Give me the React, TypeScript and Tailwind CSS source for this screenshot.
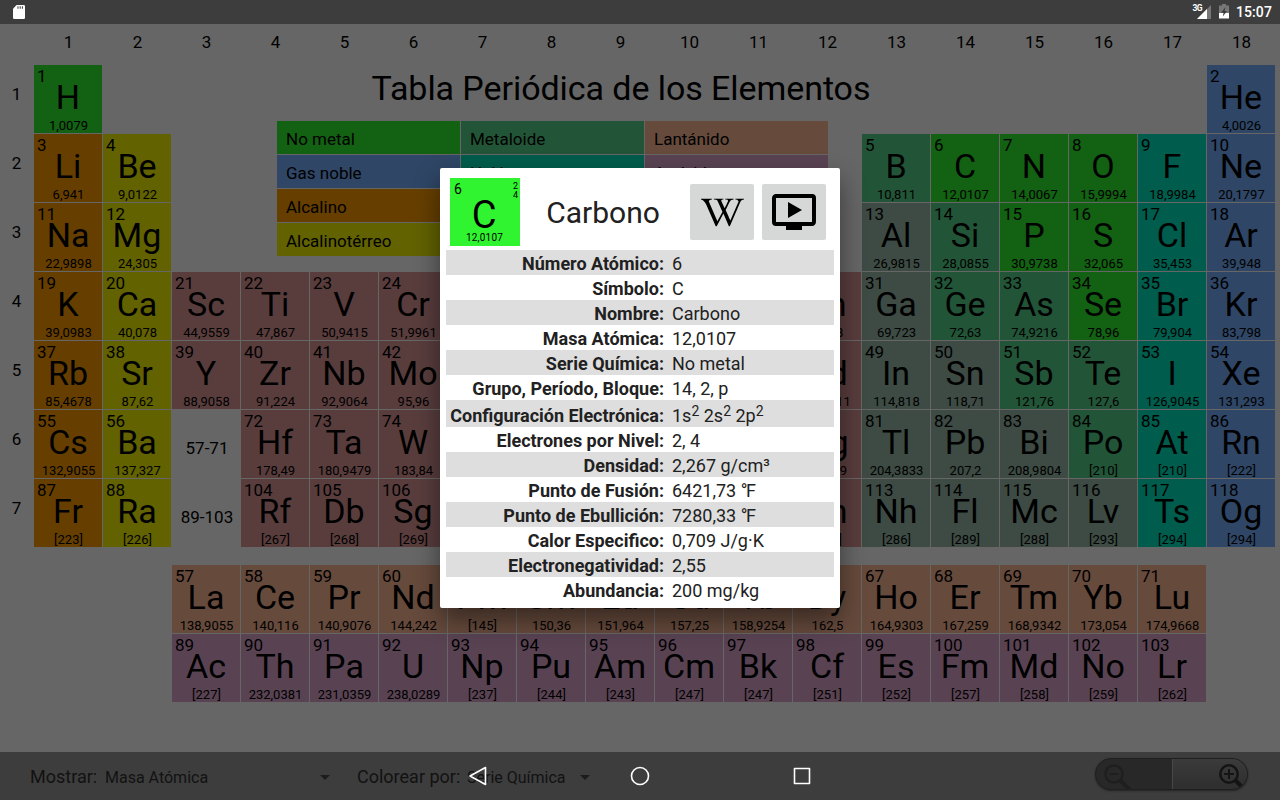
import type { ReactNode } from 'react';
import { FaWikipediaW } from 'react-icons/fa';
import { MdOndemandVideo } from 'react-icons/md';

type Series = 'N' | 'G' | 'A' | 'T' | 'M' | 'H' | 'P' | 'X' | 'L' | 'C';

const SERIES_BG: Record<Series, string> = {
  N: 'bg-[#136112]',
  G: 'bg-[#2f4666]',
  A: 'bg-[#663f00]',
  T: 'bg-[#626200]',
  M: 'bg-[#225537]',
  H: 'bg-[#005c4c]',
  X: 'bg-[#593d3d]',
  P: 'bg-[#3d4b44]',
  L: 'bg-[#664a3c]',
  C: 'bg-[#594353]',
};

const COLS = [
  '', 'col-start-2', 'col-start-3', 'col-start-4', 'col-start-5', 'col-start-6', 'col-start-7', 'col-start-8',
  'col-start-9', 'col-start-10', 'col-start-11', 'col-start-12', 'col-start-[13]', 'col-start-[14]', 'col-start-[15]',
  'col-start-[16]', 'col-start-[17]', 'col-start-[18]', 'col-start-[19]',
];

const ROWS = [
  '', 'row-start-2', 'row-start-3', 'row-start-4', 'row-start-5', 'row-start-6', 'row-start-7', 'row-start-8',
  'row-start-10', 'row-start-11',
];

// number, symbol, mass, series; each line is a run of neighbours: row, first column, elements
const RUNS: [number, number, string][] = [
  [1, 1, '1 H 1,0079 N'],
  [1, 18, '2 He 4,0026 G'],
  [2, 1, '3 Li 6,941 A|4 Be 9,0122 T'],
  [2, 13, '5 B 10,811 M|6 C 12,0107 N|7 N 14,0067 N|8 O 15,9994 N|9 F 18,9984 H|10 Ne 20,1797 G'],
  [3, 1, '11 Na 22,9898 A|12 Mg 24,305 T'],
  [3, 13, '13 Al 26,9815 P|14 Si 28,0855 M|15 P 30,9738 N|16 S 32,065 N|17 Cl 35,453 H|18 Ar 39,948 G'],
  [4, 1, '19 K 39,0983 A|20 Ca 40,078 T|21 Sc 44,9559 X|22 Ti 47,867 X|23 V 50,9415 X|24 Cr 51,9961 X|25 Mn 54,938 X|26 Fe 55,845 X|27 Co 58,9332 X|28 Ni 58,6934 X|29 Cu 63,546 X|30 Zn 65,38 X|31 Ga 69,723 P|32 Ge 72,63 M|33 As 74,9216 M|34 Se 78,96 N|35 Br 79,904 H|36 Kr 83,798 G'],
  [5, 1, '37 Rb 85,4678 A|38 Sr 87,62 T|39 Y 88,9058 X|40 Zr 91,224 X|41 Nb 92,9064 X|42 Mo 95,96 X|43 Tc [98] X|44 Ru 101,07 X|45 Rh 102,9055 X|46 Pd 106,42 X|47 Ag 107,8682 X|48 Cd 112,411 X|49 In 114,818 P|50 Sn 118,71 P|51 Sb 121,76 M|52 Te 127,6 M|53 I 126,9045 H|54 Xe 131,293 G'],
  [6, 1, '55 Cs 132,9055 A|56 Ba 137,327 T'],
  [6, 4, '72 Hf 178,49 X|73 Ta 180,9479 X|74 W 183,84 X|75 Re 186,207 X|76 Os 190,23 X|77 Ir 192,217 X|78 Pt 195,084 X|79 Au 196,9666 X|80 Hg 200,59 X|81 Tl 204,3833 P|82 Pb 207,2 P|83 Bi 208,9804 P|84 Po [210] M|85 At [210] H|86 Rn [222] G'],
  [7, 1, '87 Fr [223] A|88 Ra [226] T'],
  [7, 4, '104 Rf [267] X|105 Db [268] X|106 Sg [269] X|107 Bh [270] X|108 Hs [269] X|109 Mt [278] X|110 Ds [281] X|111 Rg [281] X|112 Cn [285] X|113 Nh [286] P|114 Fl [289] P|115 Mc [288] P|116 Lv [293] P|117 Ts [294] H|118 Og [294] G'],
  [8, 3, '57 La 138,9055 L|58 Ce 140,116 L|59 Pr 140,9076 L|60 Nd 144,242 L|61 Pm [145] L|62 Sm 150,36 L|63 Eu 151,964 L|64 Gd 157,25 L|65 Tb 158,9254 L|66 Dy 162,5 L|67 Ho 164,9303 L|68 Er 167,259 L|69 Tm 168,9342 L|70 Yb 173,054 L|71 Lu 174,9668 L'],
  [9, 3, '89 Ac [227] C|90 Th 232,0381 C|91 Pa 231,0359 C|92 U 238,0289 C|93 Np [237] C|94 Pu [244] C|95 Am [243] C|96 Cm [247] C|97 Bk [247] C|98 Cf [251] C|99 Es [252] C|100 Fm [257] C|101 Md [258] C|102 No [259] C|103 Lr [262] C'],
];

const LEGEND: [string, string][] = [
  ['No metal', SERIES_BG.N], ['Metaloide', SERIES_BG.M], ['Lantánido', SERIES_BG.L],
  ['Gas noble', SERIES_BG.G], ['Halógeno', SERIES_BG.H], ['Actínido', SERIES_BG.C],
  ['Alcalino', SERIES_BG.A], ['Otros metales', SERIES_BG.P], ['', ''],
  ['Alcalinotérreo', SERIES_BG.T], ['Metal de transición', SERIES_BG.X], ['', ''],
];

function Cell({ row, col, data }: { row: number; col: number; data: string }) {
  const [num, sym, mass, series] = data.split(' ');
  return (
    <div className={`grid grid-cols-[68px] grid-rows-[68px] ${COLS[col]} ${ROWS[row]} ${SERIES_BG[series as Series]}`}>
      <span className="col-start-1 row-start-1 self-start justify-self-start pt-px pl-[3px] text-[17px] leading-5">{num}</span>
      <span className="col-start-1 row-start-1 mb-[5px] self-center justify-self-center text-[34px] leading-10">{sym}</span>
      <span className="col-start-1 row-start-1 self-end justify-self-center pl-px text-[13px] leading-[14px]">{mass}</span>
    </div>
  );
}

function PeriodicTable() {
  return (
    <main className="grid h-[728px] shrink-0 grid-cols-[33px_repeat(18,68px)] grid-rows-[40px_repeat(7,68px)_16px_68px_68px] gap-px text-[17px]">
      {Array.from({ length: 18 }, (_, i) => (
        <div key={i} className={`row-start-1 flex items-center justify-center pb-[3px] pl-px ${COLS[i + 1]}`}>{i + 1}</div>
      ))}
      {Array.from({ length: 7 }, (_, i) => (
        <div key={i} className={`col-start-1 flex items-center justify-center pb-[9px] ${ROWS[i + 1]}`}>{i + 1}</div>
      ))}
      <h1 className="col-start-4 col-end-[17] row-start-2 flex items-center justify-center pb-[22px] pl-0.5 text-[34px] leading-10 tracking-[-0.07px] whitespace-nowrap">
        Tabla Periódica de los Elementos
      </h1>
      <div className="col-start-5 col-end-[14] row-start-2 row-end-5 grid grid-cols-[repeat(3,183px)] grid-rows-[repeat(4,33px)] gap-px pt-14 pl-9">
        {LEGEND.map(([name, bg], i) => (
          <div key={i} className={`flex items-center pt-[5px] pl-[9px] ${bg}`}>{name}</div>
        ))}
      </div>
      <div className="col-start-4 row-start-7 flex items-center justify-center pt-2.5 pl-0.5">57-71</div>
      <div className="col-start-4 row-start-8 flex items-center justify-center pt-2.5 pl-0.5">89-103</div>
      {RUNS.map(([row, col, list]) =>
        list.split('|').map((data, i) => <Cell key={data} row={row} col={col + i} data={data} />),
      )}
    </main>
  );
}

function StatusBar() {
  return (
    <header className="flex h-6 shrink-0 items-center bg-[#3d3d3d] pr-2 pl-3 text-white">
      <svg className="h-4 w-[13px]" viewBox="0 0 13 16">
        <path d="M4.6 1H11.8Q13 1 13 2.2V13.8Q13 15 11.8 15H2.2Q1 15 1 13.8V4.7Z" fill="#fff" />
        <path d="M5.5 2.3h1v2.5h-1zM7.7 2.3h1v2.5h-1zM9.9 2.3h1v2.5h-1z" fill="#3d3d3d" />
      </svg>
      <div className="ml-auto flex items-center">
        <span className="mr-[-6px] mb-2 text-[8.5px] leading-3 font-bold tracking-[-0.6px]">3G</span>
        <svg className="h-4 w-[15px]" viewBox="0 0 15 16">
          <path d="M15 1V15H1Z" fill="#777" />
          <path d="M11 5V15H1Z" fill="#fff" />
        </svg>
        <svg className="ml-2 h-4 w-[10px]" viewBox="0 0 10 16">
          <path d="M3 0H7V1.5H10V10H0V1.5H3Z" fill="#777" />
          <path d="M0 9H10V14.5H0Z" fill="#fff" />
          <path d="M6.5 3L2 8.8H4.6L3.8 12.5L8 7H5.6Z" fill="#3d3d3d" />
        </svg>
        <span className="ml-[7px] text-[14px] leading-4 font-medium tracking-[0.1px]">15:07</span>
      </div>
    </header>
  );
}

function BottomBar() {
  return (
    <footer className="relative flex h-12 shrink-0 items-center bg-[#3d3d3d] pt-0.5 pl-[30px] text-[#121212]">
      <span className="mb-0.5 w-[75px] text-[18px]">Mostrar:</span>
      <span className="w-[215px] pt-px text-[16px]">Masa Atómica</span>
      <svg className="h-[5px] w-[10px]" viewBox="0 0 10 5"><path d="M0 0H10L5 5Z" fill="#1c1c1c" /></svg>
      <span className="mb-0.5 ml-[27px] w-[110px] text-[18px]">Colorear por:</span>
      <span className="w-[113px] pt-px text-[16px]">Serie Química</span>
      <svg className="h-[5px] w-[10px]" viewBox="0 0 10 5"><path d="M0 0H10L5 5Z" fill="#1c1c1c" /></svg>
      <div className="mr-8 mb-[7px] ml-auto flex h-8 w-[153px] overflow-hidden rounded-full border border-[#202020] bg-[#282828] shadow-[0_1px_2px_#222]">
        <div className="flex w-[76px] items-center pt-1 pl-2">
          <svg className="h-7 w-7" viewBox="0 0 28 28" fill="none" stroke="#1f1f1f">
            <circle cx="10" cy="12" r="8.5" strokeWidth="2.5" />
            <path d="M5.5 12H14.5" strokeWidth="2" />
            <path d="M16 18L26 28" strokeWidth="4" />
          </svg>
        </div>
        <div className="flex flex-1 items-center justify-end border-l border-[#484848] bg-linear-to-b from-[#3b3b3b] to-[#2e2e2e] pt-1 pr-0.5">
          <svg className="h-7 w-7" viewBox="0 0 28 28" fill="none" stroke="#141414">
            <circle cx="12" cy="12" r="8.7" strokeWidth="2.5" />
            <path d="M7 12H17M12 7V17" strokeWidth="2" />
            <path d="M18 18L26 26" strokeWidth="4" />
          </svg>
        </div>
      </div>
      <nav className="absolute inset-0 flex items-center justify-center gap-[142px]">
        <svg className="h-5 w-5" viewBox="0 0 20 20" fill="none" stroke="#fff" strokeWidth="1.6" strokeLinejoin="round">
          <path d="M17.5 1.5V18.5L2 10Z" />
        </svg>
        <svg className="h-5 w-5" viewBox="0 0 20 20" fill="none" stroke="#fff" strokeWidth="1.6">
          <circle cx="10" cy="10" r="8.5" />
        </svg>
        <svg className="h-5 w-5" viewBox="0 0 20 20" fill="none" stroke="#fff" strokeWidth="1.6" strokeLinejoin="round">
          <rect x="2.5" y="2.5" width="15" height="15" />
        </svg>
      </nav>
    </footer>
  );
}

const sup = (s: string) => <sup className="relative top-[-6px] align-baseline text-[14px] leading-none">{s}</sup>;

const FACTS: [string, ReactNode][] = [
  ['Número Atómico:', '6'],
  ['Símbolo:', 'C'],
  ['Nombre:', 'Carbono'],
  ['Masa Atómica:', '12,0107'],
  ['Serie Química:', 'No metal'],
  ['Grupo, Período, Bloque:', '14, 2, p'],
  ['Configuración Electrónica:', <>1s{sup('2')} 2s{sup('2')} 2p{sup('2')}</>],
  ['Electrones por Nivel:', '2, 4'],
  ['Densidad:', '2,267 g/cm³'],
  ['Punto de Fusión:', '6421,73 ℉'],
  ['Punto de Ebullición:', '7280,33 ℉'],
  ['Calor Especifico:', '0,709 J/g·K'],
  ['Electronegatividad:', '2,55'],
  ['Abundancia:', '200 mg/kg'],
];

function FactValue({ value }: { value: ReactNode }) {
  if (typeof value === 'string' && value.endsWith('℉')) {
    return (
      <span className="pl-2 whitespace-nowrap">
        {value.slice(0, -1)}
        <span className="tracking-[-1.5px]">°</span>F
      </span>
    );
  }
  return <span className="pl-2 whitespace-nowrap">{value}</span>;
}

function ElementDialog() {
  return (
    <section className="absolute top-[168px] left-[440px] h-[440px] w-[400px] rounded-[2px] bg-white px-1.5 text-[#212121] shadow-[0_12px_26px_rgba(0,0,0,0.45)]">
      <div className="flex h-[82px] items-start pt-2.5 pl-1">
        <div className="grid h-[68px] w-[70px] grid-cols-[70px] grid-rows-[68px] bg-[#30f42f] text-black">
          <span className="col-start-1 row-start-1 self-start justify-self-start pt-[3px] pl-1 text-[14px] leading-4">6</span>
          <span className="col-start-1 row-start-1 self-start justify-self-end pt-1 pr-0.5 text-[9px] leading-[9px]">2<br />4</span>
          <span className="col-start-1 row-start-1 mt-1.5 self-center justify-self-center pr-0.5 text-[38px] leading-10">C</span>
          <span className="col-start-1 row-start-1 self-end justify-self-center pr-px pb-0.5 text-[10px] leading-3 tracking-[0.2px]">12,0107</span>
        </div>
        <h2 className="mt-[15px] w-[166px] text-center text-[30px] leading-10">Carbono</h2>
        <button className="mt-1.5 ml-1 flex h-14 w-16 items-center justify-center rounded-[2px] bg-[#d6d7d7] text-black">
          <FaWikipediaW className="h-[35px] w-[43px]" />
        </button>
        <button className="mt-1.5 ml-2 flex h-14 w-16 items-center justify-center rounded-[2px] bg-[#d6d7d7] text-black">
          <MdOndemandVideo className="h-12 w-12" />
        </button>
      </div>
      {FACTS.map(([label, value], i) => (
        <div key={label} className={`flex items-center text-[18px] leading-[25px] ${i === 6 ? 'h-[27px] pt-1' : 'h-[25px] pt-0.5'} ${i % 2 === 0 ? 'bg-[#dedede]' : ''}`}>
          <span className="flex w-[218px] justify-end font-bold whitespace-nowrap">{label}</span>
          <FactValue value={value} />
        </div>
      ))}
    </section>
  );
}

export default function App() {
  return (
    <div className="relative flex h-[800px] w-[1280px] flex-col overflow-hidden bg-[#666] font-[Roboto,sans-serif] text-black">
      <StatusBar />
      <PeriodicTable />
      <BottomBar />
      <ElementDialog />
    </div>
  );
}
